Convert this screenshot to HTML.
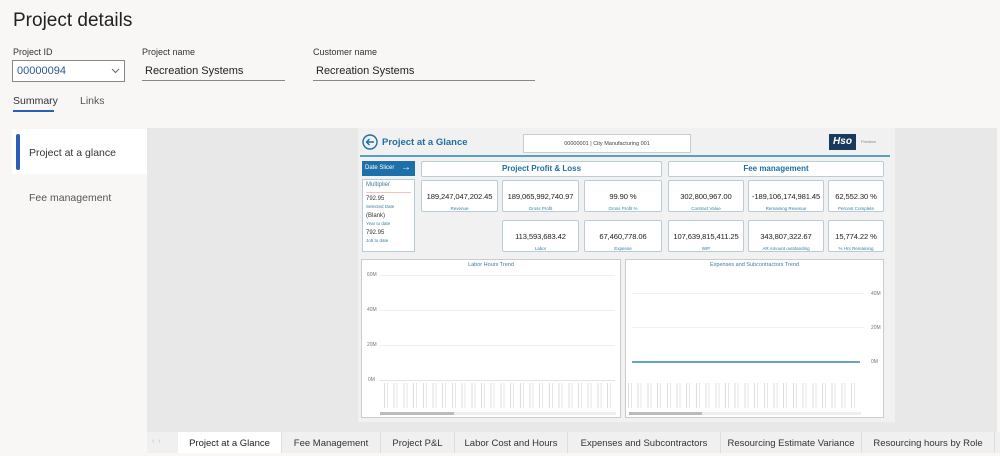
<!DOCTYPE html><html><head><style>
*{box-sizing:border-box;margin:0;padding:0}
body{width:1000px;height:453px;background:#f8f7f6;font-family:"Liberation Sans",sans-serif;position:relative;overflow:hidden;color:#222}
.a{position:absolute}
.lbl{font-size:9px;color:#333}
.card{position:absolute;background:#fff;border:1px solid #b9cdd6;border-radius:2px;text-align:center;white-space:nowrap;overflow:hidden}
.card b{display:block;font-weight:normal;font-size:7.6px;color:#222;margin-top:11px;letter-spacing:-0.1px}
.card i{display:block;font-style:normal;font-size:4.5px;color:#3a7ea1;margin-top:5px}
.hd{line-height:14px;font-size:8px;color:#1e6fa5;font-weight:bold}
.tab{position:absolute;top:432px;height:21px;font-size:9.5px;color:#333;text-align:center;line-height:24px;border-right:1px solid #ddd}
.yl{position:absolute;font-size:5px;color:#777}
.gl{position:absolute;height:1px;background:#f0f0f0}
</style></head><body>
<div class="a" style="left:13px;top:10px;font-size:19px;color:#222">Project details</div>
<div class="a lbl" style="left:13px;top:47px">Project ID</div>
<div class="a lbl" style="left:142px;top:47px">Project name</div>
<div class="a lbl" style="left:313px;top:47px">Customer name</div>
<div class="a" style="left:12px;top:60px;width:113px;height:22px;border:1px solid #888;background:#fff;font-size:11px;color:#2b5797;padding:4px 4px">00000094<svg style="position:absolute;right:4px;top:7px" width="9" height="6" viewBox="0 0 9 6"><path d="M1 1L4.5 4.5L8 1" fill="none" stroke="#666" stroke-width="1"/></svg></div>
<div class="a" style="left:142px;top:60px;width:143px;height:21px;border-bottom:1px solid #888;font-size:11px;padding:5px 3px">Recreation Systems</div>
<div class="a" style="left:313px;top:60px;width:222px;height:21px;border-bottom:1px solid #888;font-size:11px;padding:5px 3px">Recreation Systems</div>
<div class="a" style="left:13px;top:95px;font-size:10.5px;color:#333">Summary</div>
<div class="a" style="left:13px;top:110px;width:41px;height:2px;background:#2b5fb3"></div>
<div class="a" style="left:80px;top:95px;font-size:10.5px;color:#555">Links</div>
<div class="a" style="left:12px;top:129px;width:135px;height:45px;background:#fff"></div>
<div class="a" style="left:16px;top:134px;width:4px;height:36px;background:#2b5fb3;border-radius:2px"></div>
<div class="a" style="left:29px;top:147px;font-size:10.5px;color:#333">Project at a glance</div>
<div class="a" style="left:29px;top:192px;font-size:10.5px;color:#555">Fee management</div>
<div class="a" style="left:147px;top:128px;width:850px;height:304px;background:#e8e8e8"></div>
<div class="a" style="left:358px;top:128px;width:537px;height:294px;background:#f1f1f1"></div>
<svg class="a" style="left:362px;top:134px" width="16" height="16" viewBox="0 0 16 16"><circle cx="8" cy="8" r="7" fill="none" stroke="#1e6fa5" stroke-width="1.4"/><path d="M12 8H4.5M7.5 5L4.5 8L7.5 11" fill="none" stroke="#1e6fa5" stroke-width="1.4"/></svg>
<div class="a" style="left:382px;top:137px;font-size:9.5px;color:#1e6fa5;font-weight:bold">Project at a Glance</div>
<div class="a" style="left:523px;top:134px;width:168px;height:19px;background:#fff;border:1px solid #ccc;font-size:5.5px;color:#444;text-align:center;line-height:18px">00000001 | City Manufacturing 001</div>
<div class="a" style="left:829px;top:134px;width:27px;height:16px;background:#1a3a5c;color:#fff;font-weight:bold;font-style:italic;font-size:10px;text-align:center;line-height:16px">Hso</div>
<div class="a" style="left:861px;top:139px;font-size:4px;color:#888">Prediam</div>
<div class="a" style="left:360px;top:155px;width:530px;height:2px;background:#5aa0c0"></div>
<div class="a" style="left:362px;top:161px;width:53px;height:15px;background:#1d70a9;color:#fff;font-size:6px;line-height:15px;padding-left:3px">Date Slicer <span style="font-size:10px;font-weight:bold;position:absolute;right:4px;top:-1px">&#8594;</span></div>
<div class="a" style="left:362px;top:179px;width:53px;height:73px;background:#fff;border:1px solid #b9cdd6;font-size:6px;padding:2px 3px;color:#333;line-height:7px">
<div style="color:#3a7ea1;border-bottom:1px solid #f2c2c2;padding-bottom:3px;margin-bottom:3px">Multiplier</div>792.95<div style="font-size:4.5px;color:#3a7ea1;margin-bottom:3px">Selected Date</div>(Blank)<div style="font-size:4.5px;color:#3a7ea1;margin-bottom:3px">Year to date</div>792.95<div style="font-size:4.5px;color:#3a7ea1">Job to date</div></div>
<div class="card hd" style="left:421px;top:161px;width:241px;height:16px">Project Profit &amp; Loss</div>
<div class="card hd" style="left:668px;top:161px;width:216px;height:16px">Fee management</div>
<div class="card" style="left:421px;top:180px;width:77px;height:32px"><b>189,247,047,202.45</b><i>Revenue</i></div>
<div class="card" style="left:502px;top:180px;width:77px;height:32px"><b>189,065,992,740.97</b><i>Gross Profit</i></div>
<div class="card" style="left:584px;top:180px;width:78px;height:32px"><b>99.90 %</b><i>Gross Profit %</i></div>
<div class="card" style="left:668px;top:180px;width:76px;height:32px"><b>302,800,967.00</b><i>Contract Value</i></div>
<div class="card" style="left:748px;top:180px;width:76px;height:32px"><b>-189,106,174,981.45</b><i>Remaining Revenue</i></div>
<div class="card" style="left:828px;top:180px;width:56px;height:32px"><b>62,552.30 %</b><i>Percent Complete</i></div>
<div class="card" style="left:502px;top:220px;width:77px;height:32px"><b>113,593,683.42</b><i>Labor</i></div>
<div class="card" style="left:584px;top:220px;width:78px;height:32px"><b>67,460,778.06</b><i>Expense</i></div>
<div class="card" style="left:668px;top:220px;width:76px;height:32px"><b>107,639,815,411.25</b><i>WIP</i></div>
<div class="card" style="left:748px;top:220px;width:76px;height:32px"><b>343,807,322.67</b><i>AR Amount outstanding</i></div>
<div class="card" style="left:828px;top:220px;width:56px;height:32px"><b>15,774.22 %</b><i>% Hrs Remaining</i></div>
<div class="a" style="left:361px;top:259px;width:260px;height:159px;background:#fff;border:1px solid #ccc"></div>
<div class="a" style="left:625px;top:259px;width:259px;height:159px;background:#fff;border:1px solid #ccc"></div>
<div class="a" style="left:361px;top:262px;width:260px;text-align:center;font-size:5.5px;color:#3a7ea1">Labor Hours Trend</div>
<div class="a" style="left:625px;top:262px;width:259px;text-align:center;font-size:5.5px;color:#3a7ea1">Expenses and Subcontractors Trend</div>
<div class="yl" style="left:367px;top:272px">60M</div><div class="yl" style="left:367px;top:307px">40M</div><div class="yl" style="left:367px;top:342px">20M</div><div class="yl" style="left:368px;top:377px">0M</div>
<div class="gl" style="left:380px;top:275px;width:235px"></div><div class="gl" style="left:380px;top:310px;width:235px"></div><div class="gl" style="left:380px;top:345px;width:235px"></div><div class="gl" style="left:380px;top:380px;width:235px;background:#e3e3e3"></div>
<div class="yl" style="left:871px;top:291px">40M</div><div class="yl" style="left:871px;top:325px">20M</div><div class="yl" style="left:871px;top:359px">0M</div>
<div class="gl" style="left:632px;top:293px;width:232px"></div><div class="gl" style="left:632px;top:327px;width:232px"></div>
<div class="a" style="left:632px;top:361px;width:228px;height:2px;background:#63a8b8"></div>
<div class="a" style="left:384px;top:383px;width:233px;height:25px;background:repeating-linear-gradient(90deg,#bbb 0 1px,transparent 1px 3px,#ccc 3px 4px,transparent 4px 9.7px);opacity:.5"></div>
<div class="a" style="left:628px;top:383px;width:233px;height:25px;background:repeating-linear-gradient(90deg,#bbb 0 1px,transparent 1px 3px,#ccc 3px 4px,transparent 4px 9.7px);opacity:.5"></div>
<div class="a" style="left:380px;top:412px;width:236px;height:3px;background:#eee"></div><div class="a" style="left:380px;top:412px;width:74px;height:3px;background:#bbb"></div>
<div class="a" style="left:629px;top:412px;width:232px;height:3px;background:#eee"></div><div class="a" style="left:629px;top:412px;width:73px;height:3px;background:#bbb"></div>
<div class="a" style="left:147px;top:432px;width:853px;height:21px;background:#f0f0f0"></div>
<div class="a" style="left:152px;top:438px;font-size:7px;color:#bbb">&#8249; &nbsp;&#8250;</div>
<div class="tab" style="left:178px;width:104px;background:#fff;color:#222">Project at a Glance</div>
<div class="tab" style="left:282px;width:99px">Fee Management</div>
<div class="tab" style="left:381px;width:74px">Project P&amp;L</div>
<div class="tab" style="left:455px;width:113px">Labor Cost and Hours</div>
<div class="tab" style="left:568px;width:153px">Expenses and Subcontractors</div>
<div class="tab" style="left:721px;width:141px">Resourcing Estimate Variance</div>
<div class="tab" style="left:862px;width:133px">Resourcing hours by Role</div>
</body></html>
